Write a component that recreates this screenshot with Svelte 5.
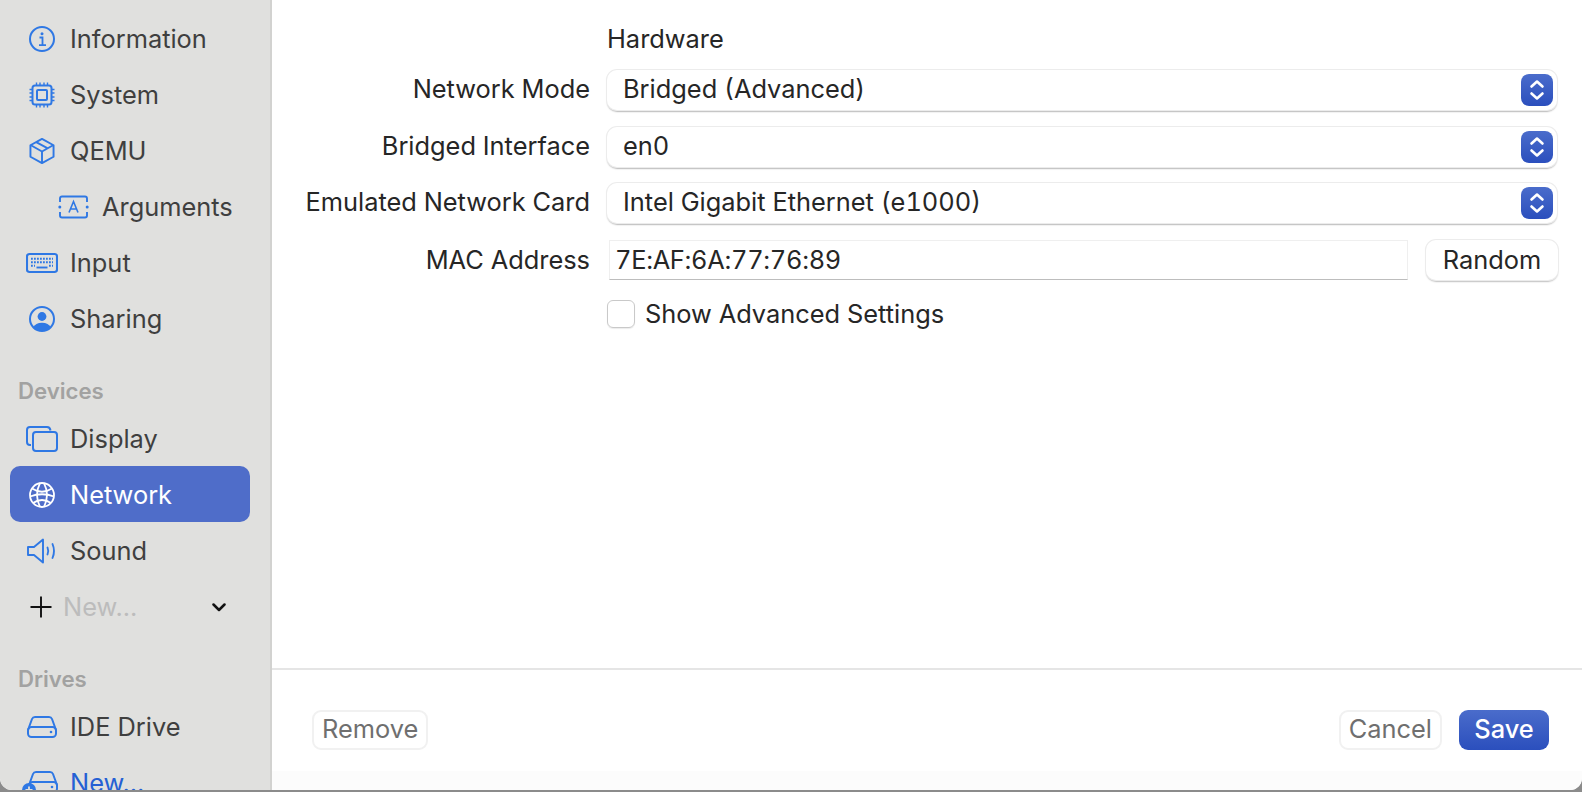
<script>
  const selects = [
    { label: 'Network Mode', value: 'Bridged (Advanced)' },
    { label: 'Bridged Interface', value: 'en0' },
    { label: 'Emulated Network Card', value: 'Intel Gigabit Ethernet (e1000)' }
  ];
</script>

{#snippet stepper()}
  <span class="stepper">
    <svg width="32" height="32" viewBox="0 0 32 32" fill="none" stroke="#fff" stroke-width="2.6" stroke-linecap="round" stroke-linejoin="round">
      <path d="M10.5 12.5 16 7.5l5.5 5" />
      <path d="M10.5 19.5 16 24.5l5.500-5" />
    </svg>
  </span>
{/snippet}

<div class="page">
  <div class="window">
    <aside class="sidebar">
      <div class="item">
        <svg class="icon" viewBox="0 0 26 26" fill="none" stroke="currentColor" stroke-width="2">
          <circle cx="13" cy="13" r="12" />
          <circle cx="13" cy="7.800" r="1.500" fill="currentColor" stroke="none" />
          <path d="M10.500 11.500H13.500V19M10 19.200H17" stroke-width="1.800" />
        </svg>
        <span class="text">Information</span>
      </div>
      <div class="item">
        <svg class="icon" viewBox="0 0 26 26" fill="none" stroke="currentColor" stroke-width="2">
          <rect x="3.500" y="3.500" width="19" height="19" rx="2.500" />
          <rect x="8" y="8" width="10" height="10" rx="1" />
          <path d="M7.500 0.500V3M11 0.500V3M15 0.500V3M18.500 0.500V3M7.500 23V25.500M11 23V25.500M15 23V25.500M18.500 23V25.500M0.500 7.500H3M0.500 11H3M0.500 15H3M0.500 18.500H3M23 7.500H25.500M23 11H25.500M23 15H25.500M23 18.500H25.500" stroke-width="1.400" />
        </svg>
        <span class="text">System</span>
      </div>
      <div class="item">
        <svg class="icon" viewBox="0 0 26 27" fill="none" stroke="currentColor" stroke-width="2" stroke-linejoin="round">
          <path d="M13 1 25 7.500V19.500L13 26 1 19.500V7.500Z" />
          <path d="M1.500 7.500 13 14 24.500 7.500M13 14V25.500M7 4.200 19 10.800" />
        </svg>
        <span class="text">QEMU</span>
      </div>
      <div class="item nested">
        <svg class="icon wide" viewBox="0 0 31 24" fill="none" stroke="currentColor" stroke-width="1.900">
          <path d="M2 7V3.500Q2 1.500 4 1.500H27Q29 1.500 29 3.500V7M2 17V20.500Q2 22.500 4 22.500H27Q29 22.500 29 20.500V17" />
          <circle cx="1.800" cy="12" r="1.500" fill="currentColor" stroke="none" />
          <circle cx="29.200" cy="12" r="1.500" fill="currentColor" stroke="none" />
          <path d="M11 17.500 15.500 6.500 20 17.500M12.500 14H18.500" stroke-width="1.600" />
        </svg>
        <span class="text">Arguments</span>
      </div>
      <div class="item">
        <svg class="icon kbd" viewBox="0 0 32 20" fill="none" stroke="currentColor">
          <rect x="1" y="1" width="30" height="18" rx="2.500" stroke-width="2.100" />
          <path d="M5 5.800H27M5 9.300H27M5 12.800H9M23 12.800H27" stroke-width="1.900" stroke-dasharray="1.800 1.200" />
          <path d="M10.500 14.500H21.500" stroke-width="1.900" />
        </svg>
        <span class="text">Input</span>
      </div>
      <div class="item">
        <svg class="icon" viewBox="0 0 26 26" fill="none" stroke="currentColor" stroke-width="2">
          <circle cx="13" cy="13" r="12" />
          <circle cx="13" cy="10.500" r="4.400" fill="currentColor" stroke="none" />
          <path d="M4 21.500Q6.500 16.800 13 16.800T22 21.500Q18.500 25 13 25T4 21.500Z" fill="currentColor" stroke="none" />
        </svg>
        <span class="text">Sharing</span>
      </div>

      <div class="section">Devices</div>
      <div class="item">
        <svg class="icon kbd" viewBox="0 0 32 26" fill="none" stroke="currentColor" stroke-width="2">
          <path d="M5 19H4Q1 19 1 16V4Q1 1 4 1H21Q24 1 24.500 4.500" />
          <rect x="7" y="6" width="24" height="19" rx="3" />
        </svg>
        <span class="text">Display</span>
      </div>
      <div class="item selected">
        <svg class="icon" viewBox="0 0 26 26" fill="none" stroke="currentColor" stroke-width="1.800">
          <circle cx="13" cy="13" r="12" />
          <path d="M11 1.200Q5 13 11 24.800M15 1.200Q21 13 15 24.800" />
          <path d="M3 6.500Q13 13 23 6.500M1 14.500Q13 10 25 14.500M4 21Q13 15 22 21" />
        </svg>
        <span class="text">Network</span>
      </div>
      <div class="item">
        <svg class="icon sound" viewBox="0 0 30 26" fill="none" stroke="currentColor" stroke-width="1.900" stroke-linejoin="round" stroke-linecap="round">
          <path d="M1 9H7L16 1.500V24.500L7 17H1Z" />
          <path d="M20.500 9.500Q22 13 20.500 16.500M25.500 6Q28.500 13 25.500 20" />
        </svg>
        <span class="text">Sound</span>
      </div>
      <div class="item add">
        <svg class="plus" viewBox="0 0 22 22" fill="none" stroke="#111" stroke-width="1.900">
          <path d="M11 0.500V21.500M0.500 11H21.500" />
        </svg>
        <span class="text muted">New...</span>
        <svg class="chev" viewBox="0 0 14 9" fill="none" stroke="#111" stroke-width="2.500" stroke-linecap="round" stroke-linejoin="round">
          <path d="M1.500 1.500 7 7l5.500-5.500" />
        </svg>
      </div>

      <div class="section">Drives</div>
      <div class="item">
        <svg class="icon drive" viewBox="0 0 30 22" fill="none" stroke="currentColor" stroke-width="2" stroke-linejoin="round">
          <path d="M1 14 5 3Q5.800 1 8 1H22Q24.200 1 25 3L29 14" />
          <rect x="1" y="11" width="28" height="10" rx="3.500" />
          <circle cx="24" cy="16" r="1.300" fill="currentColor" stroke="none" />
        </svg>
        <span class="text">IDE Drive</span>
      </div>
      <div class="item link">
        <svg class="icon drive new" viewBox="0 0 36 26" fill="none" stroke="currentColor" stroke-width="2" stroke-linejoin="round">
          <path d="M7 14 11 3Q11.800 1 14 1H28Q30.200 1 31 3L35 14" />
          <rect x="7" y="11" width="28" height="10" rx="3.500" />
          <circle cx="30" cy="16" r="1.300" fill="currentColor" stroke="none" />
          <circle cx="7" cy="19" r="7" fill="currentColor" stroke="none" />
          <path d="M7 15.500V22.500M3.500 19H10.500" stroke="#e0e0de" stroke-width="1.800" />
        </svg>
        <span class="text">New...</span>
      </div>
    </aside>

    <main class="main">
      <div class="form">
        <div></div>
        <div class="heading">Hardware</div>

        {#each selects as s}
          <div class="label">{s.label}</div>
          <div class="select">
            <span class="value">{s.value}</span>
            {@render stepper()}
          </div>
        {/each}

        <div class="label mac-label">MAC Address</div>
        <div class="mac-row">
          <div class="mac">7E:AF:6A:77:76:89</div>
          <div class="random">Random</div>
        </div>

        <div></div>
        <label class="check">
          <span class="box"></span>
          <span class="check-text">Show Advanced Settings</span>
        </label>
      </div>

      <footer class="footer">
        <div class="btn ghost">Remove</div>
        <div class="spacer"></div>
        <div class="btn ghost">Cancel</div>
        <div class="btn primary">Save</div>
      </footer>
    </main>
  </div>
</div>

<style>
  :global(body) {
    margin: 0;
    overflow: hidden;
  }
  .page {
    width: 1582px;
    height: 792px;
    background: #8b8b8b;
    font-family: Inter, "Noto Sans", sans-serif;
    font-size: 25.4px;
    overflow: hidden;
  }
  .window {
    display: flex;
    height: 790px;
    border-radius: 0 0 12px 12px;
    overflow: hidden;
    background: #fff;
  }
  .sidebar {
    width: 272px;
    flex: none;
    box-sizing: border-box;
    padding-top: 11px;
    background: #e0e0de;
    border-right: 2px solid #d2d2d0;
    color: #3f3f3f;
    overflow: hidden;
  }
  .item {
    height: 56px;
    margin: 0 20px 0 10px;
    padding-left: 60px;
    position: relative;
    display: flex;
    align-items: center;
    box-sizing: border-box;
    border-radius: 10px;
    white-space: nowrap;
  }
  .text {
    padding-bottom: 2px;
  }
  .icon {
    position: absolute;
    left: 19px;
    top: 15px;
    width: 26px;
    height: 26px;
    color: #2f78e4;
  }
  .icon.wide {
    left: 48px;
    top: 16px;
    width: 31px;
    height: 24px;
  }
  .icon.kbd {
    left: 16px;
    width: 32px;
    height: 26px;
  }
  .icon.sound {
    left: 17px;
    top: 15px;
    width: 30px;
    height: 26px;
  }
  .icon.drive {
    left: 17px;
    top: 17px;
    width: 30px;
    height: 22px;
  }
  .icon.drive.new {
    left: 12px;
    top: 16px;
    width: 36px;
    height: 26px;
  }
  .nested {
    padding-left: 92px;
  }
  .selected {
    margin-top: -1px;
    margin-bottom: 1px;
    padding-top: 2px;
    background: #4f6dc9;
    color: #fff;
  }
  .selected .icon {
    top: 16px;
    color: #fff;
  }
  .add {
    padding-left: 53px;
  }
  .plus {
    position: absolute;
    left: 20px;
    top: 17px;
    width: 22px;
    height: 22px;
  }
  .chev {
    position: absolute;
    left: 202px;
    top: 24px;
    width: 14px;
    height: 9px;
  }
  .muted {
    color: #bcbcbc;
  }
  .link {
    color: #2560d4;
  }
  .section {
    height: 32px;
    box-sizing: border-box;
    margin-top: 28px;
    margin-bottom: 4px;
    padding: 0 0 2px 18px;
    display: flex;
    align-items: center;
    font-size: 22.2px;
    font-weight: 600;
    color: #a2a2a1;
  }
  .main {
    flex: 1;
    display: flex;
    flex-direction: column;
    min-width: 0;
    color: #262626;
    font-variant-numeric: tabular-nums;
  }
  .form {
    flex: 1;
    padding: 25px 25px 0 0;
    display: grid;
    grid-template-columns: 318px 1fr;
    grid-template-rows: 45px 57px 56px 57px 60px auto;
    column-gap: 17px;
    align-items: start;
  }
  .heading {
    line-height: 28px;
  }
  .label {
    text-align: right;
    line-height: 37px;
    white-space: nowrap;
  }
  .mac-label {
    line-height: 39px;
  }
  .select {
    height: 40px;
    box-sizing: border-box;
    background: #fff;
    border-radius: 10px;
    box-shadow: 0 0 0 1px #ececec, 0 1.500px 1.500px rgba(0, 0, 0, 0.28);
    display: flex;
    align-items: center;
    justify-content: space-between;
    padding: 0 4px 0 16px;
  }
  .value {
    padding-bottom: 3px;
  }
  .stepper {
    width: 32px;
    height: 32px;
    border-radius: 8px;
    background: linear-gradient(#4a6ccb, #2b4fbd);
    display: block;
  }
  .stepper svg {
    display: block;
  }
  .mac-row {
    display: flex;
    gap: 18px;
    padding-left: 2px;
    height: 40px;
    margin-right: -1px;
  }
  .mac {
    flex: 1;
    box-sizing: border-box;
    padding-left: 5px;
    line-height: 38px;
    letter-spacing: -0.3px;
    border: 1px solid #efefef;
    border-bottom: 1.500px solid #bdbdbd;
  }
  .random {
    width: 132px;
    box-sizing: border-box;
    text-align: center;
    line-height: 39px;
    border-radius: 10px;
    background: #fff;
    box-shadow: 0 0 0 1px #ececec, 0 1.500px 1.500px rgba(0, 0, 0, 0.25);
  }
  .check {
    display: flex;
    align-items: center;
    gap: 10px;
    height: 28px;
  }
  .check-text {
    padding-bottom: 2px;
  }
  .box {
    width: 26px;
    height: 26px;
    border: 1px solid #c9c9c9;
    border-radius: 6px;
    box-shadow: 0 1px 1px rgba(0, 0, 0, 0.08);
  }
  .footer {
    height: 122px;
    box-sizing: border-box;
    flex: none;
    border-top: 2px solid #e5e5e5;
    padding: 40px 33px 0 40px;
    display: flex;
    align-items: flex-start;
    gap: 17px;
    background: linear-gradient(#fff 101px, #fcfcfc 101px);
  }
  .spacer {
    flex: 1;
  }
  .btn {
    height: 40px;
    box-sizing: border-box;
    border-radius: 9px;
    text-align: center;
  }
  .ghost {
    color: #6f6f6f;
    border: 2px solid #f1f1f1;
    line-height: 34px;
    padding: 0 8px;
  }
  .primary {
    width: 90px;
    color: #fff;
    font-weight: 500;
    line-height: 38px;
    background: linear-gradient(#4a6ccb, #2b4fbd);
  }
</style>
